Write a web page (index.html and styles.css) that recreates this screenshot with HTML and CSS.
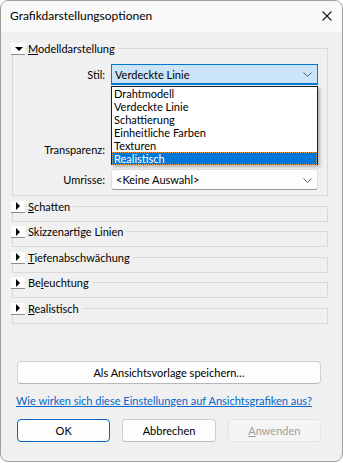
FILE: index.html
```html
<!DOCTYPE html>
<html>
<head>
    <title>Grafikdarstellungsoptionen</title>
    <link rel="stylesheet" href="styles.css">
</head>
<body>

    <div class="window">
        <div class="titlebar">
            <span class="title">Grafikdarstellungsoptionen</span>
            <svg class="close-icon" width="10" height="10" viewBox="0 0 10 10">
                <path d="M0.5 0.5 L9.5 9.5 M9.5 0.5 L0.5 9.5" stroke="#1b1b1b" stroke-width="1.1" fill="none"/>
            </svg>
        </div>

        <div class="content">
            <div class="group">
                <div class="group-head">
                    <span class="toggle"><span class="tri-down"></span></span>
                    <span class="group-title"><u>M</u>odelldarstellung</span>
                </div>
                <div class="frame frame-open">
                    <div class="row">
                        <span class="label">Stil:</span>
                        <div class="combo-wrap">
                            <div class="combo combo-focus">
                                <span>Verdeckte Linie</span>
                                <svg class="chevron" width="9" height="5" viewBox="0 0 9 5">
                                    <path d="M0.5 0.5 L4.5 4.5 L8.5 0.5" stroke="#5a5a5a" stroke-width="1" fill="none"/>
                                </svg>
                            </div>
                            <ul class="droplist">
                                <li>Drahtmodell</li>
                                <li>Verdeckte Linie</li>
                                <li>Schattierung</li>
                                <li>Einheitliche Farben</li>
                                <li>Texturen</li>
                                <li class="selected">Realistisch</li>
                            </ul>
                        </div>
                    </div>
                    <div class="row row-transparenz">
                        <span class="label">Transparenz:</span>
                        <div></div>
                    </div>
                    <div class="row row-umrisse">
                        <span class="label">Umrisse:</span>
                        <div class="combo">
                            <span>&lt;Keine Auswahl&gt;</span>
                            <svg class="chevron" width="9" height="5" viewBox="0 0 9 5">
                                <path d="M0.5 0.5 L4.5 4.5 L8.5 0.5" stroke="#5a5a5a" stroke-width="1" fill="none"/>
                            </svg>
                        </div>
                    </div>
                </div>
            </div>

            <div class="group">
                <div class="group-head">
                    <span class="toggle"><span class="tri-right"></span></span>
                    <span class="group-title"><u>S</u>chatten</span>
                </div>
                <div class="frame"></div>
            </div>

            <div class="group">
                <div class="group-head">
                    <span class="toggle"><span class="tri-right"></span></span>
                    <span class="group-title">Skizzenarti<u>g</u>e Linien</span>
                </div>
                <div class="frame"></div>
            </div>

            <div class="group">
                <div class="group-head">
                    <span class="toggle"><span class="tri-right"></span></span>
                    <span class="group-title"><u>T</u>iefenabschwächung</span>
                </div>
                <div class="frame"></div>
            </div>

            <div class="group">
                <div class="group-head">
                    <span class="toggle"><span class="tri-right"></span></span>
                    <span class="group-title">Be<u>l</u>euchtung</span>
                </div>
                <div class="frame"></div>
            </div>

            <div class="group">
                <div class="group-head">
                    <span class="toggle"><span class="tri-right"></span></span>
                    <span class="group-title"><u>R</u>ealistisch</span>
                </div>
                <div class="frame"></div>
            </div>
        </div>

        <div class="footer">
            <button class="btn btn-wide" type="button">Als Ansichtsvorlage speichern…</button>
            <a class="help-link" href="#">Wie wirken sich diese Einstellungen auf Ansichtsgrafiken aus?</a>
            <div class="button-group">
                <button class="btn btn-default" type="button">OK</button>
                <button class="btn" type="button">Abbrechen</button>
                <button class="btn btn-disabled" type="button"><u>A</u>nwenden</button>
            </div>
        </div>
    </div>

</body>
</html>
```

FILE: styles.css
```css
html {
    background: #ffffff;
}

body {
    margin: 0;
    font-family: Lato, "Noto Sans", sans-serif;
    font-size: 11px;
    color: #000;
}

.window {
    box-sizing: border-box;
    width: 343px;
    height: 462px;
    background: #f0f0f0;
    border: 1px solid #a0a0a0;
    border-radius: 8px;
    overflow: hidden;
}

.titlebar {
    height: 31px;
    display: flex;
    align-items: center;
    justify-content: space-between;
    padding: 0 10px 0 9px;
    background: #f9f9f9;
}

.title {
    font-size: 12px;
    line-height: 14px;
    margin-top: -1px;
}

.close-icon {
    margin-top: -2px;
}

.content {
    padding-top: 10px;
}

/* collapsible groups */

.group {
    margin: 3.5px 14px 0 11px;
}

.group:first-child {
    margin-top: 0;
}

.group-head {
    position: relative;
    z-index: 1;
    display: flex;
    align-items: center;
    height: 14px;
    margin-left: -1px;
}

.toggle {
    box-sizing: border-box;
    width: 14px;
    height: 12px;
    background: #fdfdfd;
    border-bottom: 1px solid #8c8c8c;
    display: flex;
    align-items: center;
    justify-content: center;
}

.tri-down {
    width: 0;
    height: 0;
    border-left: 4px solid transparent;
    border-right: 4px solid transparent;
    border-top: 4px solid #000;
    margin-left: 1px;
}

.tri-right {
    width: 0;
    height: 0;
    border-top: 4px solid transparent;
    border-bottom: 4px solid transparent;
    border-left: 4px solid #000;
}

.group-title {
    background: #f0f0f0;
    margin-left: 2px;
    padding: 0 3px 0 1px;
    line-height: 14px;
}

.frame {
    box-sizing: border-box;
    height: 16px;
    margin-top: -8px;
    border: 1px solid #d9d9d9;
}

.frame-open {
    height: 148px;
    padding: 15px 8px 0 0;
}

/* rows inside the open group */

.row {
    display: grid;
    grid-template-columns: 92px 207px;
    column-gap: 6px;
    align-items: center;
    height: 21px;
}

.label {
    text-align: right;
}

.row-transparenz {
    margin-top: 54px;
}

.row-umrisse {
    margin-top: 9px;
}

.combo-wrap {
    position: relative;
    height: 21px;
}

.combo {
    box-sizing: border-box;
    height: 21px;
    display: flex;
    align-items: center;
    justify-content: space-between;
    padding: 0 5px 0 4px;
    background: #fdfdfd;
    border: 1px solid #dedede;
    border-bottom-color: #9c9c9c;
    border-radius: 3px;
}

.combo-focus {
    background: #cce4f7;
    border: 1px solid #0078d4;
    border-bottom-width: 2px;
    border-radius: 0;
    padding-left: 3px;
}

.chevron {
    margin-top: 1px;
}

.droplist {
    position: absolute;
    top: 22px;
    left: 0;
    z-index: 2;
    box-sizing: border-box;
    width: 207px;
    height: 79px;
    margin: 0;
    padding: 0;
    list-style: none;
    background: #fff;
    border: 1px solid #1e1e1e;
    box-shadow: 2px 2px 3px rgba(0, 0, 0, 0.25);
}

.droplist li {
    height: 13px;
    line-height: 13px;
    padding-left: 2px;
}

.droplist .selected {
    background: #0078d7;
    color: #fff;
    outline: 1px dotted #f0a040;
    outline-offset: -1px;
}

/* bottom part */

.footer {
    padding: 37px 21px 0 16px;
}

.btn {
    box-sizing: border-box;
    height: 23px;
    font-family: inherit;
    font-size: 11px;
    color: #000;
    background: #fdfdfd;
    border: 1px solid #d0d0d0;
    border-bottom-color: #b8b8b8;
    border-radius: 4px;
    padding: 0;
}

.btn-wide {
    display: block;
    width: 304px;
}

.help-link {
    display: block;
    margin: 10px 0 0 -1px;
    line-height: 14px;
    color: #0066cc;
    text-decoration: underline;
    white-space: nowrap;
}

.button-group {
    display: grid;
    grid-template-columns: repeat(3, 1fr);
    column-gap: 12px;
    width: 304px;
    margin-top: 11px;
}

.btn-default {
    border: 1px solid #0067c0;
}

.btn-disabled {
    color: #a0a0a0;
    background: #f5f5f5;
    border-color: #e5e5e5;
}
```
